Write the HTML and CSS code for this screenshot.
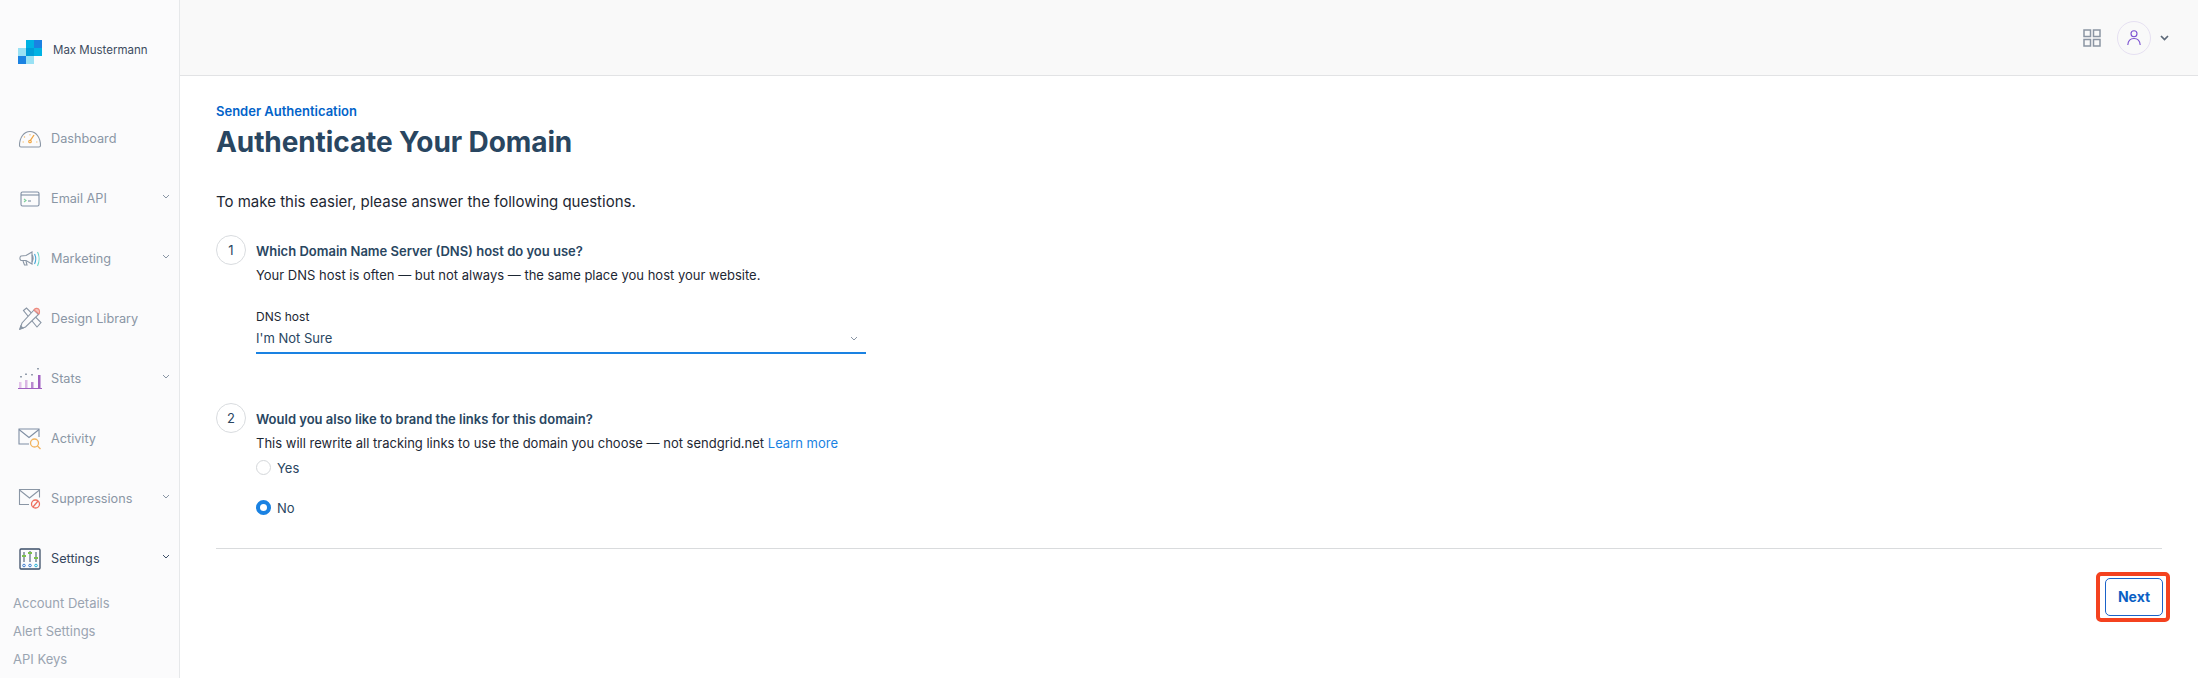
FILE: index.html
```html
<!DOCTYPE html>
<html lang="en">
<head>
<meta charset="utf-8">
<title>Authenticate Your Domain</title>
<link rel="stylesheet" href="styles.css">
</head>
<body>
<div class="app">
  <aside class="sidebar">
    <div class="brand">
      <svg class="logo" width="24" height="24" viewBox="0 0 24 24">
        <rect x="8" y="0" width="8" height="8" fill="#00b2e3"/>
        <rect x="16" y="0" width="8" height="8" fill="#1a82e2"/>
        <rect x="0" y="8" width="8" height="8" fill="#99e1f4"/>
        <rect x="8" y="8" width="8" height="8" fill="#009dd9"/>
        <rect x="16" y="8" width="8" height="8" fill="#00b2e3"/>
        <rect x="0" y="16" width="8" height="8" fill="#1a82e2"/>
        <rect x="8" y="16" width="8" height="8" fill="#99e1f4"/>
      </svg>
      <span class="brand-name">Max Mustermann</span>
    </div>
    <nav class="nav">
      <a class="nav-item">
        <svg class="nav-icon" width="24" height="18" viewBox="0 0 24 18" fill="none" stroke-width="1.1">
          <path d="M1.500 15.500C1.500 7.500 6 1.500 12 1.500s10.500 6 10.500 14c0 1-.5 1.500-1.500 1.500H3c-1 0-1.500-.5-1.500-1.500z" stroke="#8a96a5"/>
          <path d="M12 11l4-6" stroke="#f2a33a" stroke-width="1.300"/>
          <path d="M12 4v1.500M6 6.500l1 1M4.500 12H6M18 12h1.500" stroke="#f6c37a"/>
          <circle cx="12" cy="11.500" r="1.300" stroke="#f2a33a"/>
        </svg>
        <span class="nav-label">Dashboard</span>
      </a>
      <a class="nav-item">
        <svg class="nav-icon" width="24" height="18" viewBox="0 0 24 18" fill="none" stroke-width="1.1">
          <rect x="3" y="2" width="18" height="14" rx="1.500" stroke="#7f8ea3"/>
          <path d="M3 5h18" stroke="#7f8ea3"/>
          <path d="M6 9l2 1.500-2 1.500" stroke="#7ccf9a"/>
          <path d="M10 11h3" stroke="#7f8ea3"/>
        </svg>
        <span class="nav-label">Email API</span>
        <svg class="nav-caret" width="8" height="5" viewBox="0 0 8 5" fill="none"><path d="M1 1l3 3 3-3" stroke="#8a96a5"/></svg>
      </a>
      <a class="nav-item">
        <svg class="nav-icon" width="24" height="18" viewBox="0 0 24 18" fill="none" stroke-width="1.1">
          <path d="M3 6l5-.5 6-3.500v12l-6-3.500H3c-1.500-1-1.500-3.500 0-4.500z" stroke="#8a96a5"/>
          <path d="M5 11l1.500 4H9l-1-4" stroke="#8a96a5"/>
          <path d="M14 5c1.500 1.500 1.500 5 0 7" stroke="#8a96a5" fill="#8a96a5"/>
          <path d="M16.500 4c1.500 3 1.500 7 0 10" stroke="#4aa8d8"/>
          <path d="M19.500 2c2 4 2 10 0 14" stroke="#6bd6c8"/>
        </svg>
        <span class="nav-label">Marketing</span>
        <svg class="nav-caret" width="8" height="5" viewBox="0 0 8 5" fill="none"><path d="M1 1l3 3 3-3" stroke="#8a96a5"/></svg>
      </a>
      <a class="nav-item">
        <svg class="nav-icon tall" width="24" height="24" viewBox="0 0 24 24" fill="none" stroke-width="1.1">
          <path d="M5.500 3.500l3-2.500L23 15.500 19 20z" stroke="#8a96a5"/>
          <path d="M2 22l2-6L16 3l4.500 4.500L7.500 20z" stroke="#8a96a5" fill="#fbfbfc"/>
          <path d="M16 3c1-2 3.500-2 4.500-1s1.500 3.500.5 5z" stroke="#ee8a7f" fill="#f7c4bd"/>
          <path d="M1 23l1.500-5 3.500 3.300z" fill="#8a96a5"/>
        </svg>
        <span class="nav-label">Design Library</span>
      </a>
      <a class="nav-item">
        <svg class="nav-icon tall" width="24" height="24" viewBox="0 0 24 24" fill="none">
          <rect x="1" y="15" width="2.500" height="6" fill="#e3c3ea"/>
          <rect x="7" y="13" width="2.500" height="8" fill="#d9b6e3"/>
          <rect x="13" y="15" width="2.500" height="6" fill="#b98ad0"/>
          <rect x="20" y="8" width="2.500" height="13" fill="#a05fc0"/>
          <path d="M0 21.500h24" stroke="#a05fc0"/>
          <path d="M3 9v2M8 6.500v2M14 7v2M20 1v2" stroke="#5f6f85" stroke-width="1.300" stroke-dasharray="1.500 1"/>
        </svg>
        <span class="nav-label">Stats</span>
        <svg class="nav-caret" width="8" height="5" viewBox="0 0 8 5" fill="none"><path d="M1 1l3 3 3-3" stroke="#8a96a5"/></svg>
      </a>
      <a class="nav-item">
        <svg class="nav-icon tall" width="24" height="24" viewBox="0 0 24 24" fill="none" stroke-width="1.1">
          <path d="M11 17H1V2h20v8" stroke="#7f8ea3"/>
          <path d="M1 2.500l10 8 10-8" stroke="#7f8ea3"/>
          <circle cx="16.500" cy="16" r="4" stroke="#f2b35e" stroke-width="1.300"/>
          <path d="M19.500 19l3 3" stroke="#f2b35e" stroke-width="1.300"/>
        </svg>
        <span class="nav-label">Activity</span>
      </a>
      <a class="nav-item">
        <svg class="nav-icon tall" width="24" height="24" viewBox="0 0 24 24" fill="none" stroke-width="1.1">
          <path d="M11 17.500H1.500V2.500h20v8" stroke="#8a96a5"/>
          <path d="M1.500 3l10 8 10-8" stroke="#8a96a5"/>
          <circle cx="17.500" cy="17" r="4" stroke="#ee6f5f" stroke-width="1.300"/>
          <path d="M15 20l5-6" stroke="#ee6f5f" stroke-width="1.300"/>
        </svg>
        <span class="nav-label">Suppressions</span>
        <svg class="nav-caret" width="8" height="5" viewBox="0 0 8 5" fill="none"><path d="M1 1l3 3 3-3" stroke="#8a96a5"/></svg>
      </a>
      <a class="nav-item active">
        <svg class="nav-icon tall" width="24" height="24" viewBox="0 0 24 24" fill="none">
          <rect x="2" y="2" width="20" height="20" rx="1" stroke="#3d4f68" stroke-width="1.300"/>
          <path d="M6 5v10M12 4v11M18 5v10" stroke="#3d4f68"/>
          <path d="M4 9h4M10 6h4M16 11h4" stroke="#7cc04b" stroke-width="1.800"/>
          <circle cx="6" cy="18.500" r="1.300" stroke="#3f7fd0"/>
          <circle cx="12" cy="18.500" r="1.300" stroke="#3f7fd0"/>
          <circle cx="18" cy="18.500" r="1.300" stroke="#25b3d8"/>
        </svg>
        <span class="nav-label">Settings</span>
        <svg class="nav-caret" width="8" height="5" viewBox="0 0 8 5" fill="none"><path d="M1 1l3 3 3-3" stroke="#3d4f68"/></svg>
      </a>
    </nav>
    <ul class="subnav">
      <li>Account Details</li>
      <li>Alert Settings</li>
      <li>API Keys</li>
    </ul>
  </aside>
  <div class="main">
    <header class="topbar">
      <svg class="grid-icon" width="18" height="18" viewBox="0 0 18 18" fill="none" stroke="#8b95a3" stroke-width="1.500">
        <rect x="1" y="1" width="6.500" height="6.500"/>
        <rect x="10.500" y="1" width="6.500" height="6.500"/>
        <rect x="1" y="10.500" width="6.500" height="6.500"/>
        <rect x="10.500" y="10.500" width="6.500" height="6.500"/>
      </svg>
      <span class="avatar">
        <svg width="14" height="16" viewBox="0 0 14 16" fill="none" stroke="#7a4fd0" stroke-width="1.100">
          <circle cx="7" cy="3.800" r="3"/>
          <path d="M.8 15c.3-4 2.800-6.500 6.200-6.500s5.900 2.500 6.200 6.500"/>
        </svg>
      </span>
      <svg class="top-caret" width="9" height="6" viewBox="0 0 9 6" fill="none" stroke="#5c6878" stroke-width="1.700"><path d="M1 1l3.500 3.500L8 1"/></svg>
    </header>
    <main class="content">
      <p class="eyebrow">Sender Authentication</p>
      <h1 class="title">Authenticate Your Domain</h1>
      <p class="intro">To make this easier, please answer the following questions.</p>
      <section class="step step-one">
        <span class="step-num">1</span>
        <div class="step-body">
          <h2 class="step-title">Which Domain Name Server (DNS) host do you use?</h2>
          <p class="step-desc">Your DNS host is often — but not always — the same place you host your website.</p>
          <div class="select">
            <span class="select-label">DNS host</span>
            <div class="select-value">
              <span>I'm Not Sure</span>
              <svg width="8" height="5" viewBox="0 0 8 5" fill="none"><path d="M1 1l3 3 3-3" stroke="#8a96a5"/></svg>
            </div>
          </div>
        </div>
      </section>
      <section class="step step-two">
        <span class="step-num">2</span>
        <div class="step-body">
          <h2 class="step-title">Would you also like to brand the links for this domain?</h2>
          <p class="step-desc">This will rewrite all tracking links to use the domain you choose — not sendgrid.net <a class="link">Learn more</a></p>
          <div class="radio radio-yes"><span class="radio-dot"></span><span>Yes</span></div>
          <div class="radio radio-no"><span class="radio-dot checked"></span><span>No</span></div>
        </div>
      </section>
      <hr class="rule">
      <div class="actions">
        <button class="next-btn" type="button">Next</button>
      </div>
    </main>
  </div>
</div>
</body>
</html>
```
FILE: styles.css
```css
* { box-sizing: border-box; }
html, body { margin: 0; height: 100%; overflow: hidden; }
body { font-family: Inter, "Noto Sans", sans-serif; background: #fff; color: #1d2733; }
p, h1, h2, ul { margin: 0; padding: 0; }

.app { display: flex; height: 678px; overflow: hidden; }

.sidebar { flex: 0 0 180px; background: #fbfbfc; border-right: 1px solid #e6e8ea; overflow: hidden; }
.brand { height: 76px; padding: 39px 0 0 18px; display: flex; align-items: flex-start; gap: 11px; }
.logo { flex: none; margin-top: 1px; }
.brand-name { font-size: 11.500px; line-height: 22px; color: #3d4b5f; white-space: nowrap; }

.nav { padding-top: 33px; }
.nav-item { height: 60px; display: flex; align-items: center; padding: 0 9px 0 18px; color: #8a96a5; }
.nav-icon { flex: none; width: 24px; margin-right: 9px; }
.nav-label { flex: 1; font-size: 12.700px; line-height: 20px; }
.nav-caret { flex: none; margin-bottom: 5px; }
.nav-item.active { color: #34465c; }

.subnav { list-style: none; padding: 0 0 0 13px; }
.subnav li { height: 28px; font-size: 13px; line-height: 28px; color: #9aa4b1; }

.main { flex: 1; display: flex; flex-direction: column; min-width: 0; }
.topbar { flex: 0 0 76px; background: #f9f9f9; border-bottom: 1px solid #e2e3e5; display: flex; align-items: center; justify-content: flex-end; padding-right: 29px; }
.grid-icon { margin-right: 16px; }
.avatar { width: 34px; height: 34px; border-radius: 50%; border: 1px solid #e6e0f2; display: flex; align-items: center; justify-content: center; margin-right: 9px; }

.content { padding: 26px 36px 0 36px; }
.eyebrow { font-size: 13px; line-height: 18px; font-weight: 600; color: #0263c9; }
.title { font-size: 28px; line-height: 40px; font-weight: 700; color: #294661; letter-spacing: -.1px; margin-top: 2px; }
.intro { font-size: 15px; line-height: 24px; color: #1d2733; margin-top: 28px; }

.step { display: flex; }
.step-one { margin-top: 21px; }
.step-two { margin-top: 49px; }
.step-num { flex: none; width: 30px; height: 30px; border: 1px solid #d9dcdf; border-radius: 50%; display: flex; align-items: center; justify-content: center; font-size: 13px; color: #294661; margin-right: 10px; }
.step-body { flex: 1; }
.step-title { font-size: 13px; line-height: 22px; font-weight: 600; color: #294661; margin-top: 5px; }
.step-desc { font-size: 13px; line-height: 22px; color: #1d2733; margin-top: 2px; }
.link { color: #1a82e2; }

.select { width: 610px; margin-top: 22px; }
.select-label { display: block; font-size: 12px; line-height: 18px; color: #1d2733; }
.select-value { height: 27px; display: flex; align-items: center; justify-content: space-between; padding: 0 8px 3px 0; border-bottom: 2px solid #1a82e2; font-size: 13px; color: #294661; margin-top: 1px; }

.radio { display: flex; align-items: center; gap: 6px; font-size: 13px; color: #294661; line-height: 20px; }
.radio-yes { margin-top: 4px; }
.radio-no { margin-top: 20px; }
.radio-dot { width: 15px; height: 15px; border-radius: 50%; border: 1px solid #d4d7da; background: #fff; margin-bottom: 2px; }
.radio-dot.checked { border: 4.500px solid #1a82e2; }

.rule { border: 0; border-top: 1px solid #d9dbdd; margin: 30px 0 0; }

.actions { display: flex; justify-content: flex-end; margin: 29px -1px 0 0; }
.next-btn { position: relative; width: 58px; height: 38px; background: #fff; border: 1px solid #1a63c9; border-radius: 5px; color: #0a5fc4; font: 700 14px/1 Inter, sans-serif; padding: 0; }
.next-btn::after { content: ""; position: absolute; inset: -7px -8px -7px -10px; border: 4px solid #f4421f; border-radius: 5px; }
```
